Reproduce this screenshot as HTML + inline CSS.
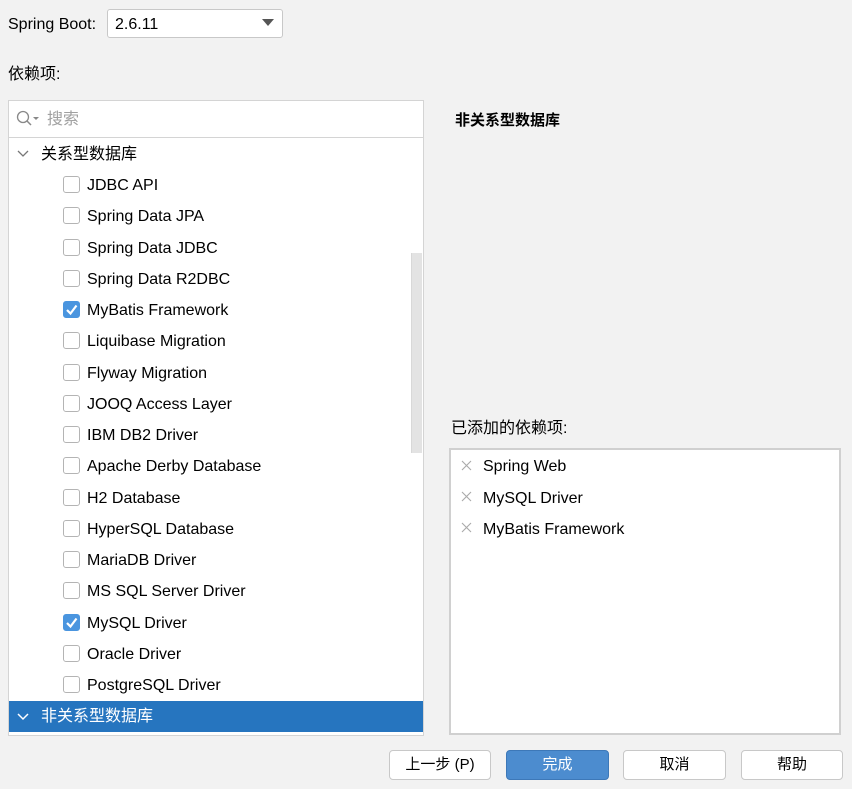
<!DOCTYPE html>
<html><head><meta charset="utf-8"><style>
*{box-sizing:border-box;margin:0;padding:0}
body{width:852px;height:789px;background:#f2f2f2;font-family:"Liberation Sans","Noto Sans CJK SC",sans-serif;font-size:16px;color:#000;position:relative;overflow:hidden}
.a{position:absolute;white-space:nowrap;line-height:20px}
.cb{position:absolute;left:63px;width:17px;height:17px;border:1px solid #b4b4b4;border-radius:3px;background:#fff}
.cb.on{background:#4a95df;border-color:#4a95df}
.it{position:absolute;left:87px;line-height:20px;white-space:nowrap}
.btn{position:absolute;top:750px;height:30px;border:1px solid #c8c8c8;border-radius:4px;background:#fff;text-align:center;line-height:28px;font-size:15px}
</style></head><body>
<div class="a" style="left:8px;top:15px">Spring Boot:</div>
<div style="position:absolute;left:107px;top:9px;width:176px;height:29px;background:#fff;border:1px solid #c8c8c8;border-radius:3px"></div>
<div class="a" style="left:115px;top:15px">2.6.11</div>
<svg style="position:absolute;left:262px;top:19px" width="12" height="8"><path d="M0 0H12L6 7Z" fill="#555"/></svg>
<div class="a" style="left:8px;top:65px">依赖项:</div>

<div style="position:absolute;left:8px;top:100px;width:416px;height:636px;background:#fff;border:1px solid #d4d4d4"></div>
<div style="position:absolute;left:9px;top:137px;width:414px;height:1px;background:#d4d4d4"></div>
<svg style="position:absolute;left:16px;top:110px" width="24" height="18"><circle cx="7" cy="7" r="5.5" fill="none" stroke="#888" stroke-width="1.3"/><path d="M11 11L15 15" stroke="#888" stroke-width="1.5"/><path d="M17 7H23L20 10Z" fill="#888"/></svg>
<div class="a" style="left:47px;top:110px;color:#a0a0a0">搜索</div>
<svg style="position:absolute;left:17px;top:150px" width="12" height="8"><path d="M1 1L6 6L11 1" fill="none" stroke="#777" stroke-width="1.3"/></svg>
<div class="a" style="left:41px;top:145px">关系型数据库</div>

<div style="position:absolute;left:411px;top:253px;width:11px;height:200px;background:#e3e3e3;border-left:1px solid #d8d8d8"></div>

<div class="cb" style="top:176px"></div><div class="it" style="top:176px">JDBC API</div>
<div class="cb" style="top:207px"></div><div class="it" style="top:207px">Spring Data JPA</div>
<div class="cb" style="top:239px"></div><div class="it" style="top:239px">Spring Data JDBC</div>
<div class="cb" style="top:270px"></div><div class="it" style="top:270px">Spring Data R2DBC</div>
<div class="cb on" style="top:301px"><svg width="15" height="15" style="position:absolute;left:0;top:0"><path d="M3 8L6.5 11.5L12.5 3.5" fill="none" stroke="#fff" stroke-width="2.2"/></svg></div><div class="it" style="top:301px">MyBatis Framework</div>
<div class="cb" style="top:332px"></div><div class="it" style="top:332px">Liquibase Migration</div>
<div class="cb" style="top:364px"></div><div class="it" style="top:364px">Flyway Migration</div>
<div class="cb" style="top:395px"></div><div class="it" style="top:395px">JOOQ Access Layer</div>
<div class="cb" style="top:426px"></div><div class="it" style="top:426px">IBM DB2 Driver</div>
<div class="cb" style="top:457px"></div><div class="it" style="top:457px">Apache Derby Database</div>
<div class="cb" style="top:489px"></div><div class="it" style="top:489px">H2 Database</div>
<div class="cb" style="top:520px"></div><div class="it" style="top:520px">HyperSQL Database</div>
<div class="cb" style="top:551px"></div><div class="it" style="top:551px">MariaDB Driver</div>
<div class="cb" style="top:582px"></div><div class="it" style="top:582px">MS SQL Server Driver</div>
<div class="cb on" style="top:614px"><svg width="15" height="15" style="position:absolute;left:0;top:0"><path d="M3 8L6.5 11.5L12.5 3.5" fill="none" stroke="#fff" stroke-width="2.2"/></svg></div><div class="it" style="top:614px">MySQL Driver</div>
<div class="cb" style="top:645px"></div><div class="it" style="top:645px">Oracle Driver</div>
<div class="cb" style="top:676px"></div><div class="it" style="top:676px">PostgreSQL Driver</div>

<div style="position:absolute;left:9px;top:701px;width:414px;height:31px;background:#2675bf"></div>
<svg style="position:absolute;left:17px;top:713px" width="12" height="8"><path d="M1 1L6 6L11 1" fill="none" stroke="#fff" stroke-width="1.5"/></svg>
<div class="a" style="left:41px;top:707px;color:#fff">非关系型数据库</div>

<div class="a" style="left:455px;top:111px;font-weight:bold;font-size:15px">非关系型数据库</div>
<div class="a" style="left:451px;top:419px">已添加的依赖项:</div>
<div style="position:absolute;left:449px;top:448px;width:392px;height:287px;background:#fff;border:2px solid #d0d0d0"></div>
<svg style="position:absolute;left:461px;top:460px" width="12" height="74"><g stroke="#aaa" stroke-width="1.1"><path d="M1 1L10 10M10 1L1 10"/><path d="M1 32L10 41M10 32L1 41"/><path d="M1 63L10 72M10 63L1 72"/></g></svg>
<div class="a" style="left:483px;top:457px">Spring Web</div>
<div class="a" style="left:483px;top:489px">MySQL Driver</div>
<div class="a" style="left:483px;top:520px">MyBatis Framework</div>

<div class="btn" style="left:389px;width:102px">上一步 (P)</div>
<div class="btn" style="left:506px;width:103px;background:#4c8ccf;border-color:#3d78b8;color:#fff">完成</div>
<div class="btn" style="left:623px;width:103px">取消</div>
<div class="btn" style="left:741px;width:102px">帮助</div>
</body></html>
